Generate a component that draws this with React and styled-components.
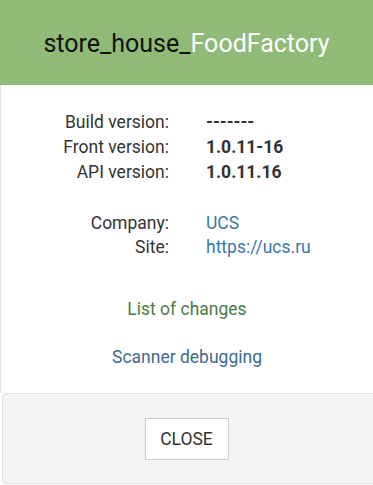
import React from "react";
import styled, { createGlobalStyle } from "styled-components";

const Global = createGlobalStyle`
  html, body { margin: 0; padding: 0; background: #fff; }
  body { font-family: Roboto, "Liberation Sans", sans-serif; color: #333; }
`;

const Modal = styled.div`
  width: 373px;
  height: 485px;
  display: flex;
  flex-direction: column;
  background: #fff;
  overflow: hidden;
`;

const Header = styled.header`
  height: 85px;
  background: #8fbb77;
  display: flex;
  align-items: center;
  justify-content: center;
  font-size: 25px;
  color: #111;
  padding-top: 1px;
  box-sizing: border-box;
`;

const Accent = styled.span`
  color: #fff;
`;

const Body = styled.section`
  flex: 1;
  border-left: 1px solid #e2e2e2;
  padding-top: 25px;
  display: flex;
  flex-direction: column;
`;

const InfoGrid = styled.div`
  display: grid;
  grid-template-columns: 168px 1fr;
  column-gap: 37px;
  font-size: 17.5px;
  line-height: ${(p) => p.$lh}px;
  margin-bottom: ${(p) => p.$mb}px;
`;

const Label = styled.div`
  text-align: right;
  color: #333;
`;

const Value = styled.div`
  color: ${(p) => (p.$link ? "#3b77aa" : "#333")};
  font-weight: ${(p) => (p.$bold ? 700 : 400)};
`;

const ActionLink = styled.div`
  text-align: center;
  font-size: 17.5px;
  line-height: 24px;
  color: ${(p) => p.$color};
  margin-bottom: ${(p) => p.$mb}px;
`;

const Footer = styled.footer`
  height: 91px;
  margin-left: 2px;
  margin-right: -4px;
  margin-bottom: 1px;
  background: #f4f4f4;
  border: 1px solid #e2e2e2;
  border-radius: 4px;
  box-sizing: border-box;
  display: flex;
  align-items: center;
  justify-content: center;
  padding-right: 4px;
`;

const CloseButton = styled.button`
  width: 84px;
  height: 42px;
  background: #fff;
  border: 1px solid #cccccc;
  border-radius: 0;
  font-family: Roboto, "Liberation Sans", sans-serif;
  font-size: 17.5px;
  color: #333;
  padding: 0;
  margin-left: -2px;
`;

export default function App() {
  return (
    <>
      <Global />
      <Modal>
        <Header>
          store_house_<Accent>FoodFactory</Accent>
        </Header>
        <Body>
          <InfoGrid $lh={25} $mb={26}>
            <Label>Build version:</Label>
            <Value $bold>-------</Value>
            <Label>Front version:</Label>
            <Value $bold>1.0.11-16</Value>
            <Label>API version:</Label>
            <Value $bold>1.0.11.16</Value>
          </InfoGrid>
          <InfoGrid $lh={24} $mb={38}>
            <Label>Company:</Label>
            <Value $link>UCS</Value>
            <Label>Site:</Label>
            <Value $link>https://ucs.ru</Value>
          </InfoGrid>
          <ActionLink $color="#4e7a44" $mb={24}>List of changes</ActionLink>
          <ActionLink $color="#3d6b8c" $mb={0}>Scanner debugging</ActionLink>
        </Body>
        <Footer>
          <CloseButton>CLOSE</CloseButton>
        </Footer>
      </Modal>
    </>
  );
}
